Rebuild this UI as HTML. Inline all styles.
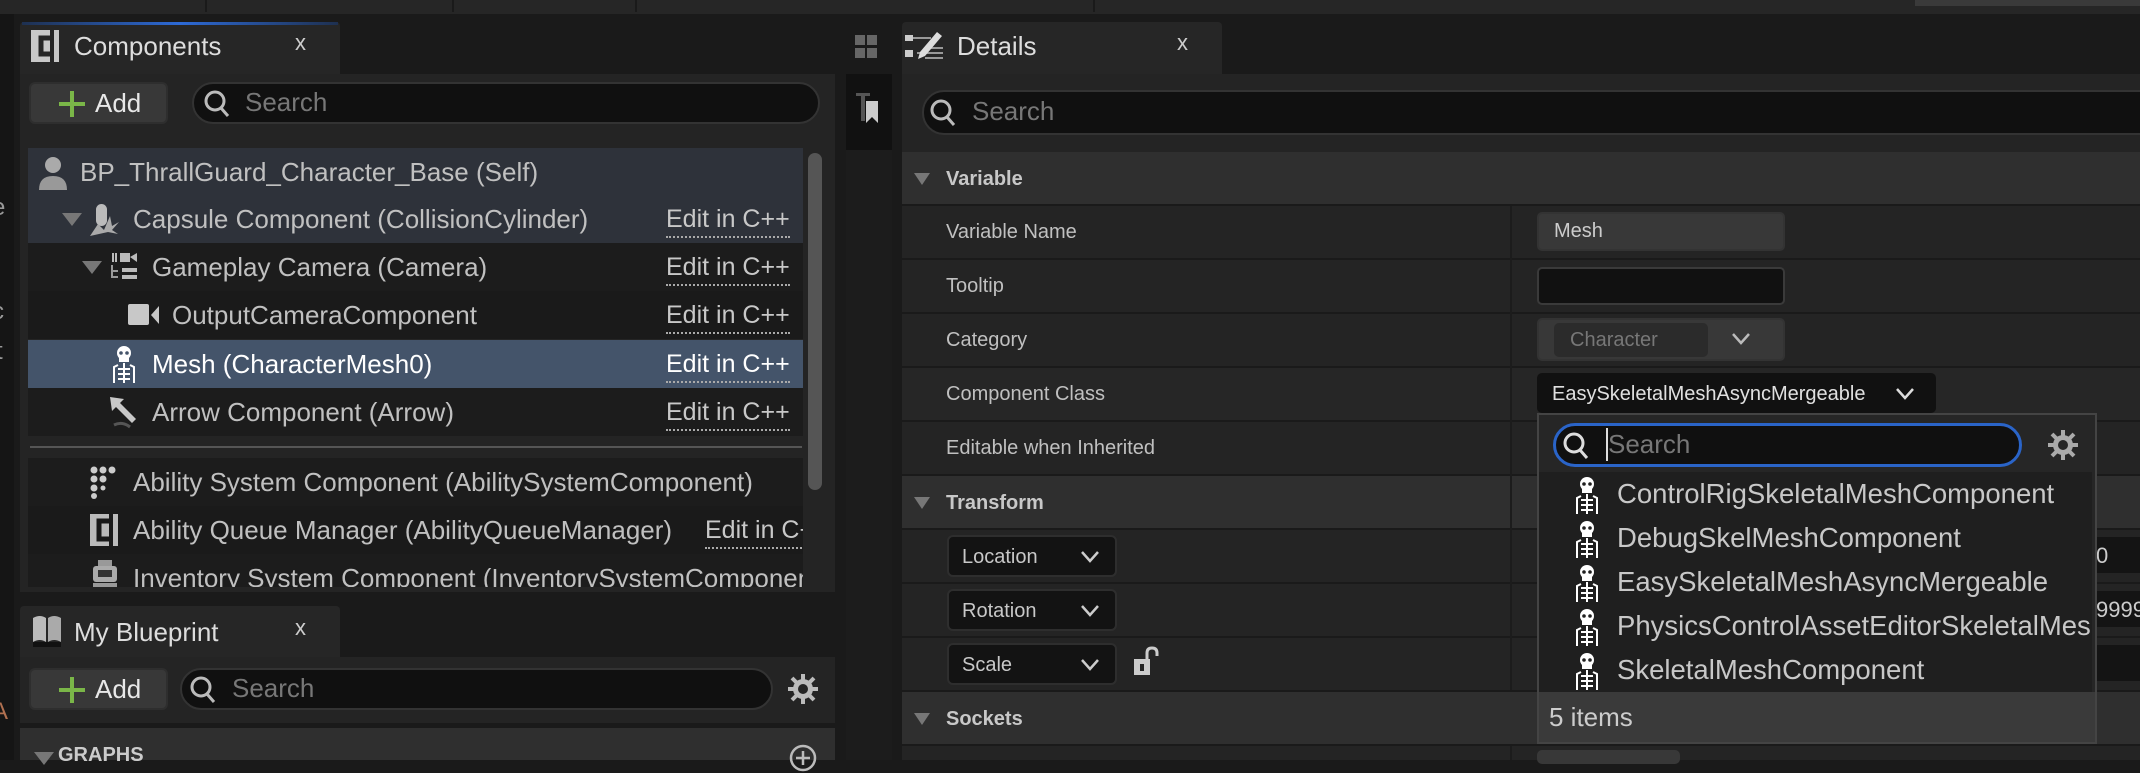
<!DOCTYPE html>
<html><head><meta charset="utf-8"><style>
*{box-sizing:border-box;margin:0;padding:0}
body{width:2140px;height:760px;overflow:hidden;background:#1a1a1a;font-family:"Liberation Sans",sans-serif;color:#c0c0c0;position:relative}
.a{position:absolute}
.t{position:absolute;white-space:nowrap;line-height:1}
.row{position:absolute;left:28px;width:775px;height:48px;overflow:hidden}
.txt{font-size:26px;top:11px}
.edit{position:absolute;left:638px;top:12px;font-size:25px;color:#c8c8c8;border-bottom:2px dotted #aaa;padding-bottom:4px;line-height:1;white-space:nowrap}
.tri{position:absolute;width:0;height:0;border-left:10px solid transparent;border-right:10px solid transparent;border-top:13px solid #777}
.lbl{position:absolute;left:946px;font-size:20px;color:#c0c0c0;white-space:nowrap;line-height:1}
.drow{position:absolute;left:902px;width:1238px;background:#242424}
.hdr{position:absolute;left:902px;width:1238px;background:#2f2f2f}
.hdr span{position:absolute;left:44px;top:17px;font-size:20px;font-weight:bold;color:#c8c8c8;line-height:1}
.hdr .tri{left:12px;top:21px;border-left-width:8px;border-right-width:8px;border-top-width:12px}
.item{position:absolute;left:1540px;width:552px;height:44px;overflow:hidden}
.item span{position:absolute;left:77px;top:8px;font-size:27.5px;color:#c8c8c8;white-space:nowrap;line-height:1}
.item svg{position:absolute;left:33px;top:4px}
.combo{position:absolute;left:947px;width:170px;height:42px;background:#131313;border:2px solid #2e2e2e;border-radius:6px}
.combo span{position:absolute;left:13px;top:10px;font-size:20px;color:#c8c8c8;line-height:1}
.combo svg{position:absolute;left:131px;top:13px}
</style></head><body>
<div class="a" style="left:0;top:0;width:2140px;height:14px;background:#262626"></div>
<div class="a" style="left:205px;top:0;width:2px;height:12px;background:#1a1a1a"></div>
<div class="a" style="left:452px;top:0;width:2px;height:12px;background:#1a1a1a"></div>
<div class="a" style="left:635px;top:0;width:2px;height:12px;background:#1a1a1a"></div>
<div class="a" style="left:1093px;top:0;width:2px;height:12px;background:#1a1a1a"></div>
<div class="a" style="left:1915px;top:0;width:225px;height:6px;background:#3a3a3a"></div>
<div class="a" style="left:0;top:14px;width:14px;height:746px;background:#151515"></div>
<div class="t" style="left:-8px;top:160px;font-size:24px;color:#999">r</div>
<div class="t" style="left:-8px;top:196px;font-size:24px;color:#999">e</div>
<div class="t" style="left:-8px;top:300px;font-size:24px;color:#999">c</div>
<div class="t" style="left:-4px;top:340px;font-size:24px;color:#999">t</div>
<div class="t" style="left:-8px;top:700px;font-size:24px;color:#b07050">A</div>

<div class="a" style="left:20px;top:22px;width:320px;height:52px;background:#262626;border-radius:4px 4px 0 0"></div>
<div class="a" style="left:22px;top:22px;width:316px;height:3px;background:linear-gradient(90deg,#1e3050,#2d6ad6 50%,#1e3050)"></div>
<svg class="a" style="left:31px;top:30px" width="30" height="32"><rect x="0" y="0" width="28" height="32" fill="#c8c8c8"/><path d="M20 8 H10 V24 H20" stroke="#262626" stroke-width="5" fill="none"/><rect x="19" y="0" width="4" height="32" fill="#262626"/></svg>
<div class="t" style="left:74px;top:33px;font-size:26px;color:#ddd">Components</div>
<div class="t" style="left:295px;top:32px;font-size:22px;color:#ccc">x</div>
<div class="a" style="left:20px;top:74px;width:815px;height:518px;background:#242424"></div>
<div class="a" style="left:29px;top:82px;width:139px;height:42px;background:#383838;border-radius:6px;border:2px solid #2e2e2e"></div>
<svg class="a" style="left:57px;top:89px" width="30" height="30"><path d="M15 2V28M2 15H28" stroke="#7ab648" stroke-width="4"/></svg>
<div class="t" style="left:95px;top:90px;font-size:26px;color:#e8e8e8">Add</div>
<div class="a" style="left:192px;top:82px;width:628px;height:42px;background:#101010;border-radius:21px;border:2px solid #333"></div>
<svg class="a" style="left:203px;top:88px" width="30" height="32"><circle cx="12" cy="13" r="9" stroke="#bbb" stroke-width="3" fill="none"/><path d="M18 20L25 28" stroke="#bbb" stroke-width="3"/></svg>
<div class="t" style="left:245px;top:89px;font-size:26px;color:#777">Search</div>

<div class="row" style="top:148px;height:47px;background:#2e323a">
  <svg class="a" style="left:8px;top:6px" width="34" height="36"><circle cx="17" cy="11" r="8" fill="#aaa"/><path d="M3 36 Q3 22 17 22 Q31 22 31 36Z" fill="#999"/></svg>
  <div class="t txt" style="left:52px">BP_ThrallGuard_Character_Base (Self)</div>
</div>
<div class="row" style="top:195px;background:#2e323a">
  <div class="tri" style="left:34px;top:18px"></div>
  <svg class="a" style="left:60px;top:7px" width="32" height="34"><rect x="8" y="2" width="11" height="22" rx="5.5" fill="#bbb"/><path d="M2 34L10 22L16 28L22 14L24 24L31 20L24 28L30 32L20 30Z" fill="#aaa"/></svg>
  <div class="t txt" style="left:105px">Capsule Component (CollisionCylinder)</div>
  <div class="edit">Edit in C++</div>
</div>
<div class="row" style="top:243px;background:#1c1c1c">
  <div class="tri" style="left:54px;top:18px"></div>
  <svg class="a" style="left:82px;top:8px" width="30" height="30"><rect x="10" y="2" width="10" height="9" fill="#bbb"/><path d="M20 6L27 2V11Z" fill="#bbb"/><path d="M3 2V11M6 2V11" stroke="#bbb" stroke-width="2"/><path d="M2 14V26H8M2 20H8" stroke="#999" stroke-width="2" fill="none"/><rect x="12" y="17" width="15" height="4" fill="#bbb"/><rect x="12" y="24" width="15" height="4" fill="#bbb"/></svg>
  <div class="t txt" style="left:124px">Gameplay Camera (Camera)</div>
  <div class="edit">Edit in C++</div>
</div>
<div class="row" style="top:291px;background:#1a1a1a">
  <svg class="a" style="left:100px;top:10px" width="32" height="28"><rect x="0" y="3" width="21" height="21" rx="2" fill="#c8c8c8"/><path d="M23 14L31 5V23Z" fill="#c8c8c8"/></svg>
  <div class="t txt" style="left:144px">OutputCameraComponent</div>
  <div class="edit">Edit in C++</div>
</div>
<div class="row" style="top:340px;background:#44546a">
  <svg class="a" style="left:82px;top:5px" width="28" height="38"><circle cx="14" cy="8" r="7" fill="#fff"/><rect x="9" y="12" width="10" height="5" fill="#fff"/><circle cx="11" cy="8" r="1.8" fill="#44546a"/><circle cx="17" cy="8" r="1.8" fill="#44546a"/><path d="M14 18V38M8 24H20M8 29H20M8 34H20M4 38V22L8 20M24 38V22L20 20" stroke="#fff" stroke-width="2" fill="none"/></svg>
  <div class="t txt" style="left:124px;color:#fff">Mesh (CharacterMesh0)</div>
  <div class="edit" style="color:#fff">Edit in C++</div>
</div>
<div class="row" style="top:388px;background:#1c1c1c">
  <svg class="a" style="left:80px;top:7px" width="32" height="34"><path d="M2 2L16 4L12 8L28 24L24 28L8 12L4 16Z" fill="#c8c8c8"/><path d="M6 30Q14 26 22 32" stroke="#555" stroke-width="3" fill="none"/></svg>
  <div class="t txt" style="left:124px">Arrow Component (Arrow)</div>
  <div class="edit">Edit in C++</div>
</div>
<div class="a" style="left:30px;top:446px;width:772px;height:2px;background:#555"></div>
<div class="row" style="top:458px;background:#1c1c1c">
  <svg class="a" style="left:60px;top:8px" width="32" height="34"><g fill="#ccc"><circle cx="6" cy="4" r="3.5"/><circle cx="15" cy="4" r="3.5"/><circle cx="24" cy="4" r="3.5"/><circle cx="6" cy="13" r="3.5"/><circle cx="15" cy="13" r="3.5"/><circle cx="6" cy="22" r="3.5"/><circle cx="15" cy="22" r="2.5"/><circle cx="6" cy="30" r="3"/></g></svg>
  <div class="t txt" style="left:105px">Ability System Component (AbilitySystemComponent)</div>
</div>
<div class="row" style="top:506px;background:#1a1a1a">
  <svg class="a" style="left:62px;top:8px" width="30" height="32"><rect x="0" y="0" width="28" height="32" fill="#bbb"/><path d="M19 7H9V25H19" stroke="#1a1a1a" stroke-width="5" fill="none"/><rect x="19" y="0" width="4" height="32" fill="#1a1a1a"/></svg>
  <div class="t txt" style="left:105px">Ability Queue Manager (AbilityQueueManager)</div>
  <div class="edit" style="left:677px">Edit in C++</div>
</div>
<div class="row" style="top:554px;height:33px;background:#1c1c1c">
  <svg class="a" style="left:62px;top:6px" width="30" height="34"><rect x="8" y="0" width="14" height="6" fill="#999"/><rect x="3" y="6" width="24" height="16" rx="3" fill="#aaa"/><rect x="8" y="10" width="14" height="7" fill="#333"/><rect x="3" y="23" width="24" height="11" fill="#999"/></svg>
  <div class="t txt" style="left:105px">Inventory System Component (InventorySystemComponent)</div>
</div>
<div class="a" style="left:808px;top:153px;width:14px;height:337px;background:#555;border-radius:7px"></div>

<div class="a" style="left:20px;top:606px;width:320px;height:51px;background:#262626;border-radius:4px 4px 0 0"></div>
<svg class="a" style="left:31px;top:614px" width="32" height="34"><path d="M2 4Q9 0 15 4V28Q9 24 2 28Z" fill="#bbb"/><path d="M17 4Q23 0 30 4V28Q23 24 17 28Z" fill="#aaa"/><rect x="2" y="28" width="28" height="5" fill="#111"/></svg>
<div class="t" style="left:74px;top:619px;font-size:26px;color:#ddd">My Blueprint</div>
<div class="t" style="left:295px;top:617px;font-size:22px;color:#ccc">x</div>
<div class="a" style="left:20px;top:657px;width:815px;height:66px;background:#242424"></div>
<div class="a" style="left:29px;top:668px;width:139px;height:42px;background:#383838;border-radius:6px;border:2px solid #2e2e2e"></div>
<svg class="a" style="left:57px;top:675px" width="30" height="30"><path d="M15 2V28M2 15H28" stroke="#7ab648" stroke-width="4"/></svg>
<div class="t" style="left:95px;top:676px;font-size:26px;color:#e8e8e8">Add</div>
<div class="a" style="left:180px;top:668px;width:593px;height:42px;background:#101010;border-radius:21px;border:2px solid #333"></div>
<svg class="a" style="left:189px;top:674px" width="30" height="32"><circle cx="12" cy="13" r="9" stroke="#bbb" stroke-width="3" fill="none"/><path d="M18 20L25 28" stroke="#bbb" stroke-width="3"/></svg>
<div class="t" style="left:232px;top:675px;font-size:26px;color:#777">Search</div>
<svg class="a" style="left:787px;top:673px" width="32" height="32"><g stroke="#bbb" stroke-width="4"><path d="M16 1V31M1 16H31M5 5L27 27M27 5L5 27"/></g><circle cx="16" cy="16" r="10" fill="#bbb"/><circle cx="16" cy="16" r="5" fill="#242424"/></svg>
<div class="a" style="left:20px;top:728px;width:815px;height:32px;background:#2f2f2f"></div>
<div class="tri" style="left:34px;top:752px"></div>
<div class="t" style="left:58px;top:745px;font-size:20px;font-weight:bold;color:#ccc">GRAPHS</div>
<svg class="a" style="left:788px;top:743px" width="30" height="30"><circle cx="15" cy="15" r="12" stroke="#bbb" stroke-width="2.5" fill="none"/><path d="M15 8V22M8 15H22" stroke="#bbb" stroke-width="2.5"/></svg>

<svg class="a" style="left:855px;top:35px" width="40" height="24"><rect x="0" y="0" width="10" height="10" fill="#666"/><rect x="0" y="13" width="10" height="10" fill="#666"/><rect x="12" y="0" width="10" height="10" fill="#666"/><rect x="12" y="13" width="10" height="10" fill="#666"/></svg>
<div class="a" style="left:846px;top:74px;width:46px;height:76px;background:#111"></div>
<div class="a" style="left:846px;top:150px;width:46px;height:610px;background:#1c1c1c"></div>
<svg class="a" style="left:856px;top:93px" width="26" height="32"><rect x="0" y="0" width="14" height="3" fill="#555"/><rect x="5" y="0" width="4" height="28" fill="#555"/><path d="M10 8H22V30L16 24L10 30Z" fill="#ccc"/></svg>
<div class="a" style="left:892px;top:14px;width:10px;height:746px;background:#1a1a1a"></div>

<div class="a" style="left:902px;top:22px;width:320px;height:52px;background:#262626;border-radius:4px 4px 0 0"></div>
<svg class="a" style="left:903px;top:30px" width="42" height="32"><rect x="2" y="5" width="8" height="6" fill="#ccc"/><rect x="2" y="20" width="8" height="7" fill="#ccc"/><path d="M10 8H28M14 23H40M22 28H40M26 18H40" stroke="#999" stroke-width="2"/><path d="M34 2L39 6L22 26L15 29L17 22Z" fill="#ddd"/></svg>
<div class="t" style="left:957px;top:33px;font-size:26px;color:#ddd">Details</div>
<div class="t" style="left:1177px;top:32px;font-size:22px;color:#ccc">x</div>
<div class="a" style="left:902px;top:74px;width:1238px;height:78px;background:#242424"></div>
<div class="a" style="left:922px;top:90px;width:1240px;height:45px;background:#101010;border-radius:22px;border:2px solid #333"></div>
<svg class="a" style="left:929px;top:97px" width="30" height="32"><circle cx="12" cy="13" r="9" stroke="#bbb" stroke-width="3" fill="none"/><path d="M18 20L25 28" stroke="#bbb" stroke-width="3"/></svg>
<div class="t" style="left:972px;top:98px;font-size:26px;color:#777">Search</div>

<div class="hdr" style="top:152px;height:52px"><div class="tri"></div><span>Variable</span></div>
<div class="drow" style="top:206px;height:52px"></div>
<div class="drow" style="top:260px;height:52px"></div>
<div class="drow" style="top:314px;height:52px"></div>
<div class="drow" style="top:368px;height:52px;background:#262626"></div>
<div class="drow" style="top:422px;height:52px"></div>
<div class="hdr" style="top:476px;height:52px"><div class="tri"></div><span>Transform</span></div>
<div class="drow" style="top:530px;height:52px"></div>
<div class="drow" style="top:584px;height:52px"></div>
<div class="drow" style="top:638px;height:52px"></div>
<div class="hdr" style="top:692px;height:52px"><div class="tri"></div><span>Sockets</span></div>
<div class="drow" style="top:746px;height:14px"></div>
<div class="a" style="left:1510px;top:206px;width:2px;height:484px;background:#1c1c1c"></div>
<div class="a" style="left:1510px;top:746px;width:2px;height:14px;background:#1c1c1c"></div>

<div class="lbl" style="top:222px">Variable Name</div>
<div class="lbl" style="top:276px">Tooltip</div>
<div class="lbl" style="top:330px">Category</div>
<div class="lbl" style="top:384px">Component Class</div>
<div class="lbl" style="top:438px">Editable when Inherited</div>

<div class="a" style="left:1537px;top:212px;width:248px;height:39px;background:#383838;border-radius:5px;border:2px solid #333"></div>
<div class="t" style="left:1554px;top:221px;font-size:20px;color:#ccc">Mesh</div>
<div class="a" style="left:1537px;top:267px;width:248px;height:38px;background:#111;border-radius:5px;border:2px solid #3a3a3a"></div>
<div class="a" style="left:1537px;top:318px;width:248px;height:43px;background:#383838;border-radius:5px;border:2px solid #333"></div>
<div class="a" style="left:1554px;top:323px;width:154px;height:34px;background:#2b2b2b;border-radius:5px"></div>
<div class="t" style="left:1570px;top:330px;font-size:20px;color:#777">Character</div>
<svg class="a" style="left:1731px;top:332px" width="20" height="14"><path d="M2 2L10 11L18 2" stroke="#bbb" stroke-width="2.5" fill="none"/></svg>
<div class="a" style="left:1537px;top:373px;width:399px;height:40px;background:#111;border-radius:5px"></div>
<div class="t" style="left:1552px;top:384px;font-size:20px;color:#e0e0e0">EasySkeletalMeshAsyncMergeable</div>
<svg class="a" style="left:1895px;top:387px" width="20" height="14"><path d="M2 2L10 11L18 2" stroke="#ddd" stroke-width="2.5" fill="none"/></svg>

<div class="combo" style="top:535px"><span>Location</span><svg width="20" height="14"><path d="M2 2L10 11L18 2" stroke="#ccc" stroke-width="2.5" fill="none"/></svg></div>
<div class="combo" style="top:589px"><span>Rotation</span><svg width="20" height="14"><path d="M2 2L10 11L18 2" stroke="#ccc" stroke-width="2.5" fill="none"/></svg></div>
<div class="combo" style="top:643px"><span>Scale</span><svg width="20" height="14"><path d="M2 2L10 11L18 2" stroke="#ccc" stroke-width="2.5" fill="none"/></svg></div>
<svg class="a" style="left:1133px;top:646px" width="30" height="32"><rect x="1" y="13" width="16" height="16" fill="#ccc"/><rect x="7" y="18" width="4" height="7" fill="#242424"/><path d="M14 13V7Q14 2 19 2Q24 2 24 7V10" stroke="#ccc" stroke-width="3" fill="none"/></svg>
<div class="a" style="left:2096px;top:537px;width:50px;height:36px;background:#141414"></div>
<div class="t" style="left:2096px;top:545px;font-size:22px;color:#ccc">0</div>
<div class="a" style="left:2096px;top:591px;width:50px;height:36px;background:#141414"></div>
<div class="t" style="left:2096px;top:599px;font-size:22px;color:#ccc">9999</div>
<div class="a" style="left:2096px;top:645px;width:50px;height:36px;background:#141414"></div>
<div class="a" style="left:1537px;top:750px;width:143px;height:14px;background:#383838;border-radius:5px"></div>

<div class="a" style="left:1537px;top:413px;width:560px;height:331px;background:#262626;border:2px solid #444"></div>
<div class="a" style="left:1553px;top:423px;width:469px;height:44px;background:#101010;border-radius:22px;border:3px solid #2a64c8"></div>
<svg class="a" style="left:1562px;top:430px" width="30" height="32"><circle cx="12" cy="13" r="9" stroke="#ddd" stroke-width="3" fill="none"/><path d="M18 20L25 28" stroke="#ddd" stroke-width="3"/></svg>
<div class="a" style="left:1606px;top:428px;width:2px;height:33px;background:#ddd"></div>
<div class="t" style="left:1608px;top:431px;font-size:26px;color:#777">Search</div>
<svg class="a" style="left:2047px;top:429px" width="32" height="32"><g stroke="#aaa" stroke-width="4"><path d="M16 1V31M1 16H31M5 5L27 27M27 5L5 27"/></g><circle cx="16" cy="16" r="10" fill="#aaa"/><circle cx="16" cy="16" r="5" fill="#262626"/></svg>
<div class="a" style="left:1539px;top:472px;width:553px;height:220px;background:#1f1f1f"></div>
<div class="a" style="left:1539px;top:692px;width:556px;height:50px;background:#3a3a3a"></div>
<div class="t" style="left:1549px;top:704px;font-size:26px;color:#ccc">5 items</div>

<div class="item" style="top:472px"><svg width="28" height="38"><circle cx="14" cy="8" r="7" fill="#fff"/><rect x="9" y="12" width="10" height="5" fill="#fff"/><circle cx="11" cy="8" r="1.8" fill="#1f1f1f"/><circle cx="17" cy="8" r="1.8" fill="#1f1f1f"/><path d="M14 18V38M8 24H20M8 29H20M8 34H20M4 38V22L8 20M24 38V22L20 20" stroke="#fff" stroke-width="2" fill="none"/></svg><span>ControlRigSkeletalMeshComponent</span></div>
<div class="item" style="top:516px"><svg width="28" height="38"><circle cx="14" cy="8" r="7" fill="#fff"/><rect x="9" y="12" width="10" height="5" fill="#fff"/><circle cx="11" cy="8" r="1.8" fill="#1f1f1f"/><circle cx="17" cy="8" r="1.8" fill="#1f1f1f"/><path d="M14 18V38M8 24H20M8 29H20M8 34H20M4 38V22L8 20M24 38V22L20 20" stroke="#fff" stroke-width="2" fill="none"/></svg><span>DebugSkelMeshComponent</span></div>
<div class="item" style="top:560px"><svg width="28" height="38"><circle cx="14" cy="8" r="7" fill="#fff"/><rect x="9" y="12" width="10" height="5" fill="#fff"/><circle cx="11" cy="8" r="1.8" fill="#1f1f1f"/><circle cx="17" cy="8" r="1.8" fill="#1f1f1f"/><path d="M14 18V38M8 24H20M8 29H20M8 34H20M4 38V22L8 20M24 38V22L20 20" stroke="#fff" stroke-width="2" fill="none"/></svg><span>EasySkeletalMeshAsyncMergeable</span></div>
<div class="item" style="top:604px"><svg width="28" height="38"><circle cx="14" cy="8" r="7" fill="#fff"/><rect x="9" y="12" width="10" height="5" fill="#fff"/><circle cx="11" cy="8" r="1.8" fill="#1f1f1f"/><circle cx="17" cy="8" r="1.8" fill="#1f1f1f"/><path d="M14 18V38M8 24H20M8 29H20M8 34H20M4 38V22L8 20M24 38V22L20 20" stroke="#fff" stroke-width="2" fill="none"/></svg><span>PhysicsControlAssetEditorSkeletalMeshComponent</span></div>
<div class="item" style="top:648px"><svg width="28" height="38"><circle cx="14" cy="8" r="7" fill="#fff"/><rect x="9" y="12" width="10" height="5" fill="#fff"/><circle cx="11" cy="8" r="1.8" fill="#1f1f1f"/><circle cx="17" cy="8" r="1.8" fill="#1f1f1f"/><path d="M14 18V38M8 24H20M8 29H20M8 34H20M4 38V22L8 20M24 38V22L20 20" stroke="#fff" stroke-width="2" fill="none"/></svg><span>SkeletalMeshComponent</span></div>
</body></html>
